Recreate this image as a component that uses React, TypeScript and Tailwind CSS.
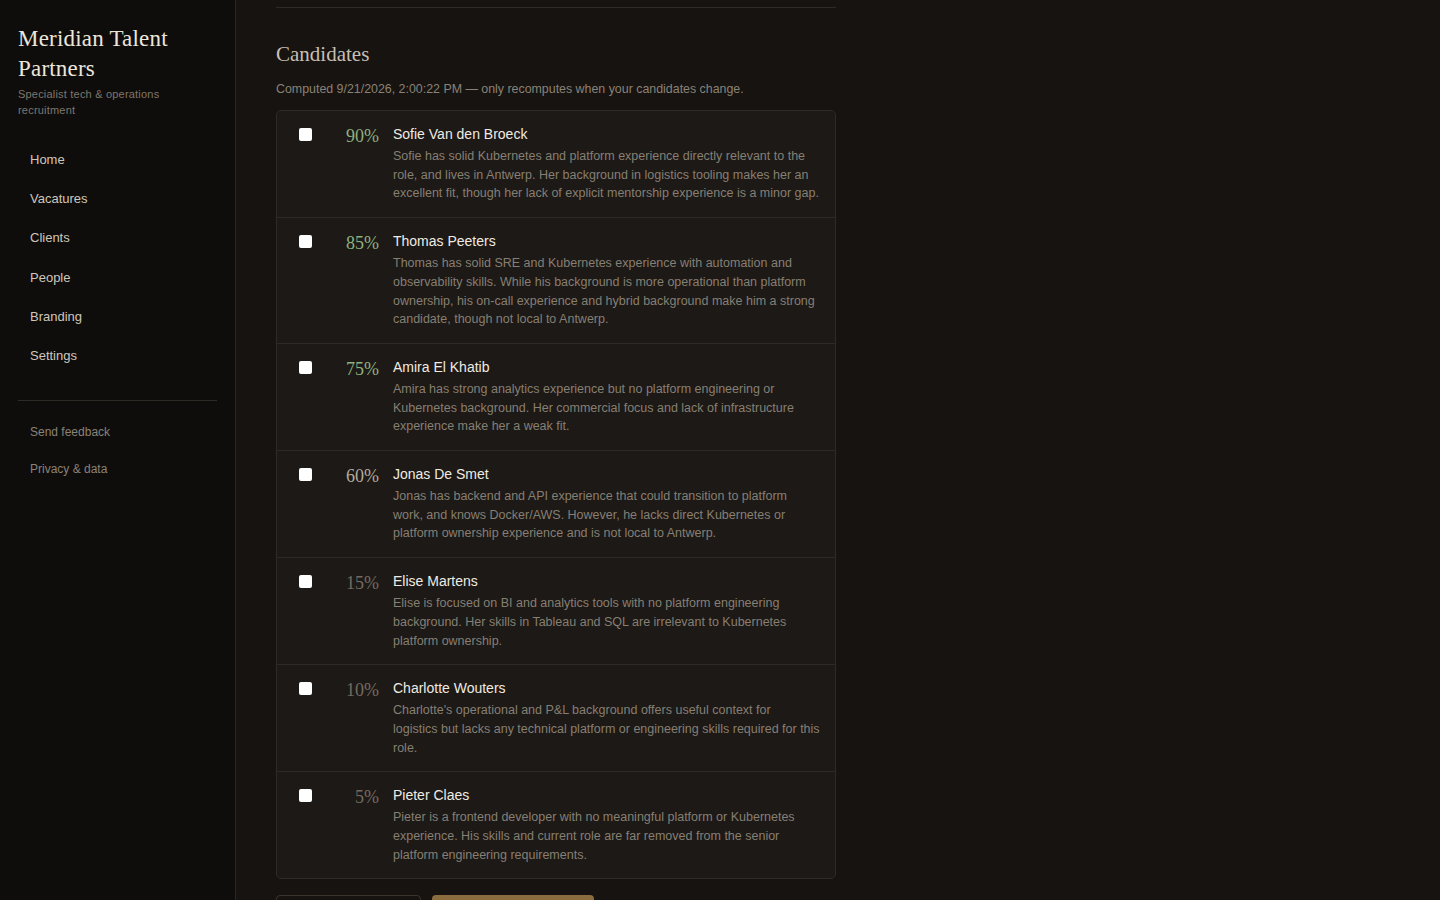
import React from 'react'

type Candidate = {
  name: string
  score: number
  summary: string
}

// summaries keep the line breaks of the original layout
const candidates: Candidate[] = [
  {
    name: 'Sofie Van den Broeck',
    score: 90,
    summary:
      'Sofie has solid Kubernetes and platform experience directly relevant to the\nrole, and lives in Antwerp. Her background in logistics tooling makes her an\nexcellent fit, though her lack of explicit mentorship experience is a minor gap.',
  },
  {
    name: 'Thomas Peeters',
    score: 85,
    summary:
      'Thomas has solid SRE and Kubernetes experience with automation and\nobservability skills. While his background is more operational than platform\nownership, his on-call experience and hybrid background make him a strong\ncandidate, though not local to Antwerp.',
  },
  {
    name: 'Amira El Khatib',
    score: 75,
    summary:
      'Amira has strong analytics experience but no platform engineering or\nKubernetes background. Her commercial focus and lack of infrastructure\nexperience make her a weak fit.',
  },
  {
    name: 'Jonas De Smet',
    score: 60,
    summary:
      'Jonas has backend and API experience that could transition to platform\nwork, and knows Docker/AWS. However, he lacks direct Kubernetes or\nplatform ownership experience and is not local to Antwerp.',
  },
  {
    name: 'Elise Martens',
    score: 15,
    summary:
      'Elise is focused on BI and analytics tools with no platform engineering\nbackground. Her skills in Tableau and SQL are irrelevant to Kubernetes\nplatform ownership.',
  },
  {
    name: 'Charlotte Wouters',
    score: 10,
    summary:
      "Charlotte's operational and P&L background offers useful context for\nlogistics but lacks any technical platform or engineering skills required for this\nrole.",
  },
  {
    name: 'Pieter Claes',
    score: 5,
    summary:
      'Pieter is a frontend developer with no meaningful platform or Kubernetes\nexperience. His skills and current role are far removed from the senior\nplatform engineering requirements.',
  },
]

const nav = ['Home', 'Vacatures', 'Clients', 'People', 'Branding', 'Settings']

function scoreColor(score: number) {
  if (score >= 70) return 'text-[#8fb07f]'
  if (score >= 40) return 'text-[#b3ab9c]'
  return 'text-[#746b60]'
}

function Sidebar() {
  return (
    <aside className="w-[236px] shrink-0 h-screen bg-[#0f0d0c] border-r border-[#2a2622] px-[18px] pt-[24px]">
      <div className="font-['Liberation_Serif',serif] text-[23px] leading-[30px] text-[#ece6da] tracking-[0.2px]">
        Meridian Talent Partners
      </div>
      <div className="max-w-[165px] text-[11px] leading-[16px] text-[#7e766b] mt-[2px] tracking-[0.2px]">
        Specialist tech &amp; operations recruitment
      </div>
      <nav className="mt-[22px] flex flex-col">
        {nav.map(item => (
          <a key={item} className="px-3 h-[39.3px] flex items-center text-[13px] text-[#cfc7b9]">
            {item}
          </a>
        ))}
      </nav>
      <div className="mt-[24px] border-t border-[#2e2a25]" />
      <div className="mt-[13px] flex flex-col">
        <a className="px-3 h-[37px] flex items-center text-[12px] text-[#8a8276]">Send feedback</a>
        <a className="px-3 h-[37px] flex items-center text-[12px] text-[#8a8276]">Privacy &amp; data</a>
      </div>
    </aside>
  )
}

function CandidateRow({ c }: { c: Candidate }) {
  return (
    <div className="flex items-start pl-[22px] pr-[14px] pt-[13px] pb-[14px] border-b border-[#2e2a25] last:border-b-0">
      <input type="checkbox" className="mt-[4px] w-[13px] h-[13px] shrink-0 appearance-none bg-white rounded-[2px]" />
      <div
        className={`w-[67px] shrink-0 text-right font-['Liberation_Serif',serif] text-[18px] leading-[24px] ${scoreColor(c.score)}`}
      >
        {c.score}%
      </div>
      <div className="ml-[14px] flex-1 min-w-0">
        <div className="text-[14px] leading-[20px] text-[#f0ebe2]">{c.name}</div>
        <p className="mt-[3px] whitespace-pre-line text-[12.5px] leading-[18.7px] text-[#877f73]">{c.summary}</p>
      </div>
    </div>
  )
}

export default function App() {
  return (
    <div className="flex h-screen overflow-hidden bg-[#161311] font-['Liberation_Sans',Arial,sans-serif]">
      <Sidebar />
      <main className="flex-1 pl-[40px]">
        <div className="w-[560px]">
          <div className="h-[8px] border-b border-[#2e2a25]" />
          <h2 className="mt-[33px] font-['Liberation_Serif',serif] text-[21px] leading-[26px] text-[#c8bfb1]">
            Candidates
          </h2>
          <p className="mt-[14px] text-[12.4px] leading-[16px] text-[#8a8276]">
            Computed 9/21/2026, 2:00:22 PM — only recomputes when your candidates change.
          </p>
          <div className="mt-[13px] rounded-[5px] border border-[#2e2a25] bg-[#1c1916]">
            {candidates.map(c => (
              <CandidateRow key={c.name} c={c} />
            ))}
          </div>
          <div className="mt-[16px] flex gap-[11px]">
            <button className="w-[145px] h-[40px] pt-[20px] rounded-[4px] border border-[#3a342d] text-[13px] text-[#cfc7b9]">
              Select all
            </button>
            <button className="w-[162px] h-[40px] pt-[20px] rounded-[4px] bg-[#8a6c3e] text-[13px] text-[#f5efe4]">
              Shortlist selected
            </button>
          </div>
        </div>
      </main>
    </div>
  )
}
